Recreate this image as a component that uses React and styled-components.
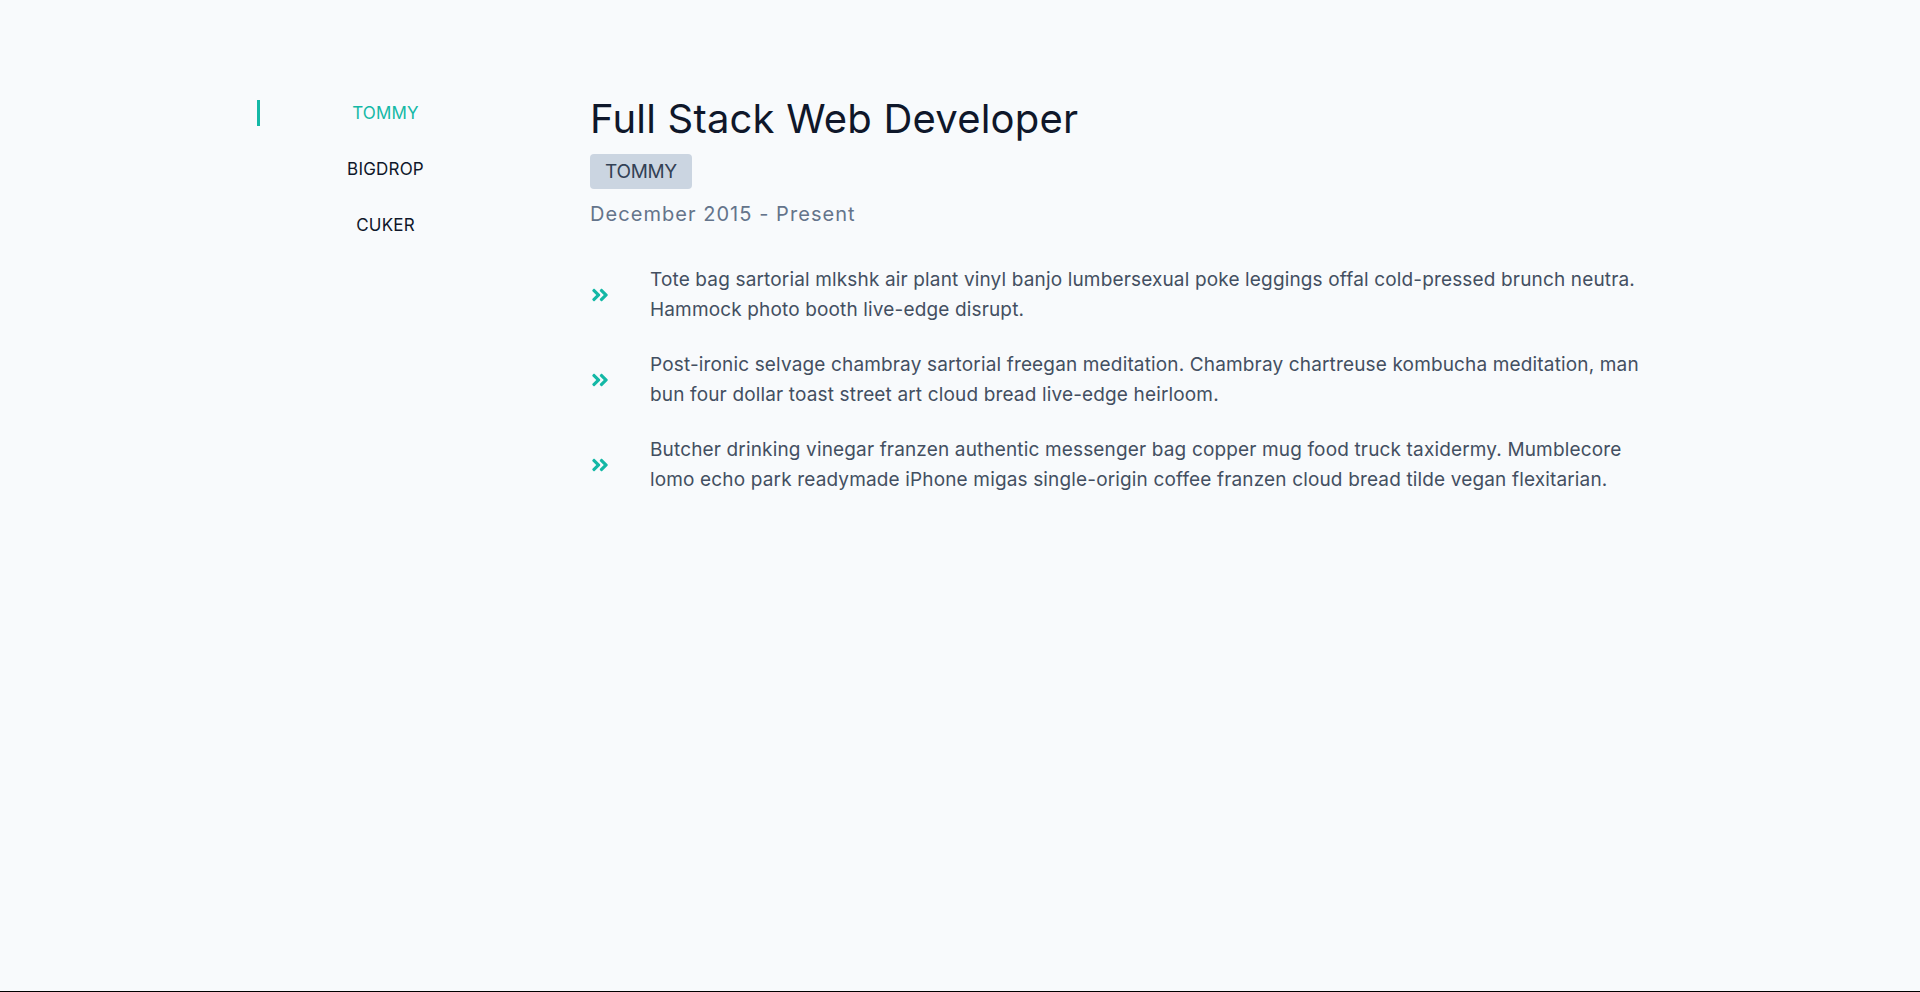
import React, { useState } from "react";
import styled, { createGlobalStyle } from "styled-components";
import { FaAngleDoubleRight } from "react-icons/fa";

const GlobalStyle = createGlobalStyle`
  html, body { margin: 0; padding: 0; }
  body {
    background: #f8fafc;
    font-family: Inter, "Noto Sans", "Liberation Sans", sans-serif;
    -webkit-font-smoothing: antialiased;
  }
  * { box-sizing: border-box; }
`;

const Page = styled.div`
  min-height: 100vh;
  background: #f8fafc;
  border-bottom: 1px solid #000;
`;

const Container = styled.section`
  width: 1406px;
  margin: 0 auto;
  padding-top: 95px;
  display: flex;
  gap: 79px;
  align-items: flex-start;
`;

const Nav = styled.nav`
  width: 254px;
  flex-shrink: 0;
  padding-top: 5px;
  display: flex;
  flex-direction: column;
  gap: 30px;
`;

const NavItem = styled.button`
  all: unset;
  cursor: pointer;
  display: block;
  height: 26px;
  line-height: 26px;
  text-align: center;
  font-family: Inter, "Noto Sans", sans-serif;
  font-size: 17px;
  letter-spacing: 0.2px;
  color: ${(p) => (p.$active ? "#14b8a6" : "#0f172a")};
  border-left: 3px solid ${(p) => (p.$active ? "#14b8a6" : "transparent")};
`;

const Content = styled.article`
  flex: 1;
  min-width: 0;
  display: flex;
  flex-direction: column;
  align-items: flex-start;
`;

const Title = styled.h3`
  margin: 0;
  font-size: 40px;
  line-height: 48px;
  font-weight: 400;
  color: #0f172a;
  letter-spacing: 0.2px;
`;

const Badge = styled.span`
  margin-top: 11px;
  display: inline-block;
  height: 35px;
  line-height: 35px;
  padding: 0 15px;
  border-radius: 4px;
  background: #cbd5e1;
  color: #334155;
  font-size: 19px;
  letter-spacing: -0.3px;
`;

const DateText = styled.p`
  margin: 11px 0 0;
  font-size: 20px;
  line-height: 28px;
  color: #64748b;
  letter-spacing: 1.05px;
`;

const List = styled.ul`
  list-style: none;
  margin: 37px 0 0;
  padding: 0;
  display: flex;
  flex-direction: column;
  gap: 25px;
`;

const Item = styled.li`
  display: flex;
  align-items: center;
`;

const IconBox = styled.span`
  width: 60px;
  flex-shrink: 0;
  display: flex;
  align-items: center;
  color: #14b8a6;
`;

const ItemText = styled.p`
  margin: 0;
  font-size: 19px;
  line-height: 30px;
  color: #434f61;
  letter-spacing: 0.15px;
`;

const jobs = [
  {
    company: "TOMMY",
    title: "Full Stack Web Developer",
    dates: "December 2015 - Present",
    duties: [
      "Tote bag sartorial mlkshk air plant vinyl banjo lumbersexual poke leggings offal cold-pressed brunch neutra. Hammock photo booth live-edge disrupt.",
      "Post-ironic selvage chambray sartorial freegan meditation. Chambray chartreuse kombucha meditation, man bun four dollar toast street art cloud bread live-edge heirloom.",
      "Butcher drinking vinegar franzen authentic messenger bag copper mug food truck taxidermy. Mumblecore lomo echo park readymade iPhone migas single-origin coffee franzen cloud bread tilde vegan flexitarian.",
    ],
  },
  {
    company: "BIGDROP",
    title: "Front-End Engineer",
    dates: "May 2015 - December 2015",
    duties: [
      "Hashtag drinking vinegar scenester mumblecore snackwave four dollar toast, lumbersexual XOXO. Cardigan church-key pabst, biodiesel vexillologist viral squid.",
    ],
  },
  {
    company: "CUKER",
    title: "Engineering Intern",
    dates: "May 2014 - September 2015",
    duties: [
      "I'm baby woke mlkshk wolf bitters live-edge blue bottle, hammock freegan copper mug whatever cold-pressed.",
    ],
  },
];

export default function App() {
  const [active, setActive] = useState(0);
  const job = jobs[active];
  return (
    <>
      <GlobalStyle />
      <Page>
        <Container>
          <Nav>
            {jobs.map((j, i) => (
              <NavItem key={j.company} $active={i === active} onClick={() => setActive(i)}>
                {j.company}
              </NavItem>
            ))}
          </Nav>
          <Content>
            <Title>{job.title}</Title>
            <Badge>{job.company}</Badge>
            <DateText>{job.dates}</DateText>
            <List>
              {job.duties.map((d, i) => (
                <Item key={i}>
                  <IconBox>
                    <FaAngleDoubleRight size={20} />
                  </IconBox>
                  <ItemText>{d}</ItemText>
                </Item>
              ))}
            </List>
          </Content>
        </Container>
      </Page>
    </>
  );
}
